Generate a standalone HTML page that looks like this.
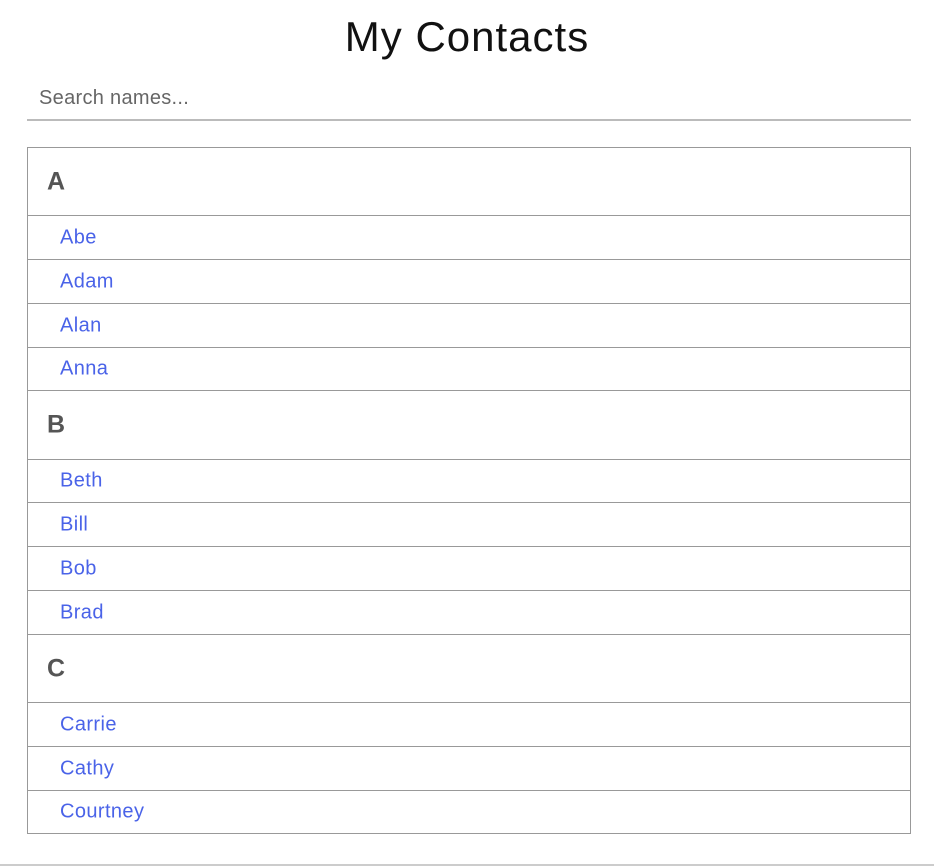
<!DOCTYPE html>
<html><head><style>
body{margin:0;width:934px;height:866px;background:#fff;font-family:"Liberation Sans",sans-serif;position:relative;overflow:hidden}
h1{position:absolute;top:12px;left:0;width:934px;margin:0;text-align:center;font-weight:normal;font-size:42px;color:#111;line-height:50px;letter-spacing:1px}
.search{position:absolute;left:27px;top:84px;width:884px;height:35px;border-bottom:2px solid #bbb;}
.search span{position:absolute;left:12px;top:3px;font-size:20px;color:#666;letter-spacing:0.3px}
.r{position:absolute;left:27px;width:882px;border:1px solid #999;box-sizing:content-box}
.h{font-weight:bold;font-size:25px;color:#555}
.h span{position:absolute;left:19px;top:50%;transform:translateY(-50%)}
.i{font-size:20px;color:#4a63e8;letter-spacing:0.4px}
.i span{position:absolute;left:32px;top:50%;transform:translateY(-50%)}
.foot{position:absolute;left:0;top:864px;width:934px;height:2px;background:#ccc}
</style></head><body>
<h1>My Contacts</h1>
<div class="search"><span>Search names...</span></div>
<div class="r h" style="top:147px;height:67px"><span>A</span></div>
<div class="r i" style="top:215px;height:43px"><span>Abe</span></div>
<div class="r i" style="top:259px;height:43px"><span>Adam</span></div>
<div class="r i" style="top:303px;height:43px"><span>Alan</span></div>
<div class="r i" style="top:347px;height:42px"><span>Anna</span></div>
<div class="r h" style="top:390px;height:68px"><span>B</span></div>
<div class="r i" style="top:459px;height:42px"><span>Beth</span></div>
<div class="r i" style="top:502px;height:43px"><span>Bill</span></div>
<div class="r i" style="top:546px;height:43px"><span>Bob</span></div>
<div class="r i" style="top:590px;height:43px"><span>Brad</span></div>
<div class="r h" style="top:634px;height:67px"><span>C</span></div>
<div class="r i" style="top:702px;height:43px"><span>Carrie</span></div>
<div class="r i" style="top:746px;height:43px"><span>Cathy</span></div>
<div class="r i" style="top:790px;height:42px"><span>Courtney</span></div>
<div class="foot"></div>
</body></html>
